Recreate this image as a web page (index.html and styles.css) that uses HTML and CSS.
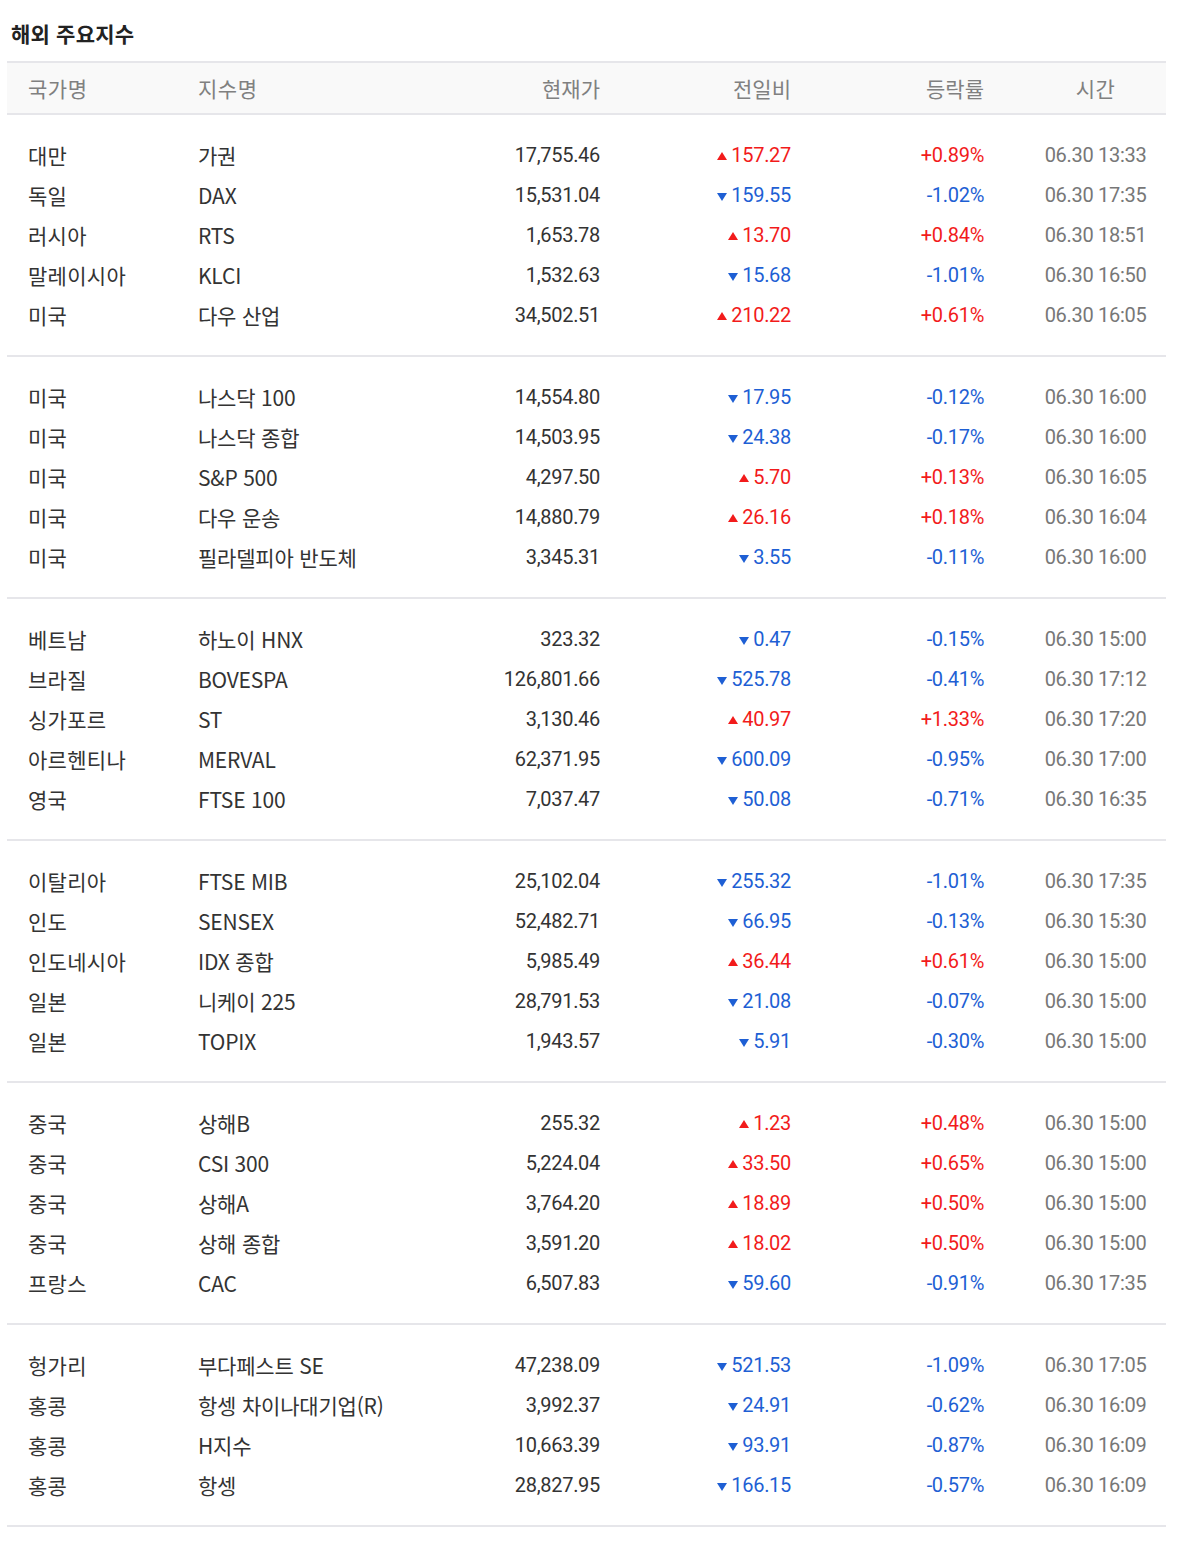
FILE: index.html
```html
<!DOCTYPE html>
<html lang="ko">
<head>
<meta charset="utf-8">
<title>해외 주요지수</title>
<link rel="stylesheet" href="styles.css">
</head>
<body>
<div class="wrap">
  <h2 class="title">해외 주요지수</h2>
  <div class="table">
    <div class="head">
      <div class="c1">국가명</div><div class="c2">지수명</div><div class="c3">현재가</div><div class="c4">전일비</div><div class="c5">등락률</div><div class="c6">시간</div>
    </div>

    <div class="group">
      <div class="row"><div class="c1">대만</div><div class="c2">가권</div><div class="c3">17,755.46</div><div class="c4 up"><i class="tri"></i>157.27</div><div class="c5 up">+0.89%</div><div class="c6">06.30 13:33</div></div>
      <div class="row"><div class="c1">독일</div><div class="c2">DAX</div><div class="c3">15,531.04</div><div class="c4 dn"><i class="tri"></i>159.55</div><div class="c5 dn">-1.02%</div><div class="c6">06.30 17:35</div></div>
      <div class="row"><div class="c1">러시아</div><div class="c2">RTS</div><div class="c3">1,653.78</div><div class="c4 up"><i class="tri"></i>13.70</div><div class="c5 up">+0.84%</div><div class="c6">06.30 18:51</div></div>
      <div class="row"><div class="c1">말레이시아</div><div class="c2">KLCI</div><div class="c3">1,532.63</div><div class="c4 dn"><i class="tri"></i>15.68</div><div class="c5 dn">-1.01%</div><div class="c6">06.30 16:50</div></div>
      <div class="row"><div class="c1">미국</div><div class="c2">다우 산업</div><div class="c3">34,502.51</div><div class="c4 up"><i class="tri"></i>210.22</div><div class="c5 up">+0.61%</div><div class="c6">06.30 16:05</div></div>
    </div>

    <div class="group">
      <div class="row"><div class="c1">미국</div><div class="c2">나스닥 100</div><div class="c3">14,554.80</div><div class="c4 dn"><i class="tri"></i>17.95</div><div class="c5 dn">-0.12%</div><div class="c6">06.30 16:00</div></div>
      <div class="row"><div class="c1">미국</div><div class="c2">나스닥 종합</div><div class="c3">14,503.95</div><div class="c4 dn"><i class="tri"></i>24.38</div><div class="c5 dn">-0.17%</div><div class="c6">06.30 16:00</div></div>
      <div class="row"><div class="c1">미국</div><div class="c2">S&amp;P 500</div><div class="c3">4,297.50</div><div class="c4 up"><i class="tri"></i>5.70</div><div class="c5 up">+0.13%</div><div class="c6">06.30 16:05</div></div>
      <div class="row"><div class="c1">미국</div><div class="c2">다우 운송</div><div class="c3">14,880.79</div><div class="c4 up"><i class="tri"></i>26.16</div><div class="c5 up">+0.18%</div><div class="c6">06.30 16:04</div></div>
      <div class="row"><div class="c1">미국</div><div class="c2">필라델피아 반도체</div><div class="c3">3,345.31</div><div class="c4 dn"><i class="tri"></i>3.55</div><div class="c5 dn">-0.11%</div><div class="c6">06.30 16:00</div></div>
    </div>

    <div class="group">
      <div class="row"><div class="c1">베트남</div><div class="c2">하노이 HNX</div><div class="c3">323.32</div><div class="c4 dn"><i class="tri"></i>0.47</div><div class="c5 dn">-0.15%</div><div class="c6">06.30 15:00</div></div>
      <div class="row"><div class="c1">브라질</div><div class="c2">BOVESPA</div><div class="c3">126,801.66</div><div class="c4 dn"><i class="tri"></i>525.78</div><div class="c5 dn">-0.41%</div><div class="c6">06.30 17:12</div></div>
      <div class="row"><div class="c1">싱가포르</div><div class="c2">ST</div><div class="c3">3,130.46</div><div class="c4 up"><i class="tri"></i>40.97</div><div class="c5 up">+1.33%</div><div class="c6">06.30 17:20</div></div>
      <div class="row"><div class="c1">아르헨티나</div><div class="c2">MERVAL</div><div class="c3">62,371.95</div><div class="c4 dn"><i class="tri"></i>600.09</div><div class="c5 dn">-0.95%</div><div class="c6">06.30 17:00</div></div>
      <div class="row"><div class="c1">영국</div><div class="c2">FTSE 100</div><div class="c3">7,037.47</div><div class="c4 dn"><i class="tri"></i>50.08</div><div class="c5 dn">-0.71%</div><div class="c6">06.30 16:35</div></div>
    </div>

    <div class="group">
      <div class="row"><div class="c1">이탈리아</div><div class="c2">FTSE MIB</div><div class="c3">25,102.04</div><div class="c4 dn"><i class="tri"></i>255.32</div><div class="c5 dn">-1.01%</div><div class="c6">06.30 17:35</div></div>
      <div class="row"><div class="c1">인도</div><div class="c2">SENSEX</div><div class="c3">52,482.71</div><div class="c4 dn"><i class="tri"></i>66.95</div><div class="c5 dn">-0.13%</div><div class="c6">06.30 15:30</div></div>
      <div class="row"><div class="c1">인도네시아</div><div class="c2">IDX 종합</div><div class="c3">5,985.49</div><div class="c4 up"><i class="tri"></i>36.44</div><div class="c5 up">+0.61%</div><div class="c6">06.30 15:00</div></div>
      <div class="row"><div class="c1">일본</div><div class="c2">니케이 225</div><div class="c3">28,791.53</div><div class="c4 dn"><i class="tri"></i>21.08</div><div class="c5 dn">-0.07%</div><div class="c6">06.30 15:00</div></div>
      <div class="row"><div class="c1">일본</div><div class="c2">TOPIX</div><div class="c3">1,943.57</div><div class="c4 dn"><i class="tri"></i>5.91</div><div class="c5 dn">-0.30%</div><div class="c6">06.30 15:00</div></div>
    </div>

    <div class="group">
      <div class="row"><div class="c1">중국</div><div class="c2">상해B</div><div class="c3">255.32</div><div class="c4 up"><i class="tri"></i>1.23</div><div class="c5 up">+0.48%</div><div class="c6">06.30 15:00</div></div>
      <div class="row"><div class="c1">중국</div><div class="c2">CSI 300</div><div class="c3">5,224.04</div><div class="c4 up"><i class="tri"></i>33.50</div><div class="c5 up">+0.65%</div><div class="c6">06.30 15:00</div></div>
      <div class="row"><div class="c1">중국</div><div class="c2">상해A</div><div class="c3">3,764.20</div><div class="c4 up"><i class="tri"></i>18.89</div><div class="c5 up">+0.50%</div><div class="c6">06.30 15:00</div></div>
      <div class="row"><div class="c1">중국</div><div class="c2">상해 종합</div><div class="c3">3,591.20</div><div class="c4 up"><i class="tri"></i>18.02</div><div class="c5 up">+0.50%</div><div class="c6">06.30 15:00</div></div>
      <div class="row"><div class="c1">프랑스</div><div class="c2">CAC</div><div class="c3">6,507.83</div><div class="c4 dn"><i class="tri"></i>59.60</div><div class="c5 dn">-0.91%</div><div class="c6">06.30 17:35</div></div>
    </div>

    <div class="group">
      <div class="row"><div class="c1">헝가리</div><div class="c2">부다페스트 SE</div><div class="c3">47,238.09</div><div class="c4 dn"><i class="tri"></i>521.53</div><div class="c5 dn">-1.09%</div><div class="c6">06.30 17:05</div></div>
      <div class="row"><div class="c1">홍콩</div><div class="c2">항셍 차이나대기업(R)</div><div class="c3">3,992.37</div><div class="c4 dn"><i class="tri"></i>24.91</div><div class="c5 dn">-0.62%</div><div class="c6">06.30 16:09</div></div>
      <div class="row"><div class="c1">홍콩</div><div class="c2">H지수</div><div class="c3">10,663.39</div><div class="c4 dn"><i class="tri"></i>93.91</div><div class="c5 dn">-0.87%</div><div class="c6">06.30 16:09</div></div>
      <div class="row"><div class="c1">홍콩</div><div class="c2">항셍</div><div class="c3">28,827.95</div><div class="c4 dn"><i class="tri"></i>166.15</div><div class="c5 dn">-0.57%</div><div class="c6">06.30 16:09</div></div>
    </div>
  </div>
</div>
</body>
</html>
```

FILE: styles.css
```css
html, body {
  margin: 0;
  padding: 0;
  background: #fff;
}
body {
  font-family: Roboto, "Noto Sans CJK KR", sans-serif;
  color: #333;
}
.wrap {
  width: 1159px;
  margin-left: 7px;
}
.title {
  margin: 0;
  padding: 23px 0 0 4px;
  height: 61px;
  box-sizing: border-box;
  font-family: "Noto Sans CJK KR", sans-serif;
  font-size: 21px;
  line-height: 20px;
  font-weight: 700;
  letter-spacing: 0.2px;
  color: #222;
}
.head, .row {
  display: grid;
  grid-template-columns: 191px 202px 200px 191px 193px 1fr;
  align-items: center;
}
.head {
  height: 50px;
  background: #f9f9f9;
  border-top: 2px solid #e6e6ea;
  border-bottom: 2px solid #e6e6ea;
  font-family: "Noto Sans CJK KR", sans-serif;
  font-size: 21px;
  color: #808080;
  letter-spacing: 0.5px;
}
.head .c3, .head .c4, .head .c5 { letter-spacing: 0; }
.group {
  padding: 20px 0;
  border-bottom: 2px solid #e6e6ea;
}
.row {
  height: 40px;
  font-size: 20px;
  line-height: 40px;
  letter-spacing: -0.3px;
}
.row .c1, .row .c2 {
  font-family: "Noto Sans CJK KR", sans-serif;
  font-size: 21px;
  letter-spacing: 0.3px;
}
.row .c2 { letter-spacing: -0.2px; }
.c1 { padding-left: 21px; white-space: nowrap; }
.c2 { white-space: nowrap; }
.c3, .c4, .c5 { text-align: right; white-space: nowrap; }
.c6 { text-align: center; padding-left: 41px; white-space: nowrap; }
.row .c6 { color: #777; }
.up { color: #f21b1b; }
.dn { color: #1e5fd4; }
.tri {
  display: inline-block;
  width: 0;
  height: 0;
  margin-right: 4px;
  border-left: 5px solid transparent;
  border-right: 5px solid transparent;
  vertical-align: middle;
}
.up .tri {
  border-bottom: 8px solid #f21b1b;
  position: relative;
  top: -1px;
}
.dn .tri {
  border-top: 8px solid #1e5fd4;
  position: relative;
  top: 0;
}
```
